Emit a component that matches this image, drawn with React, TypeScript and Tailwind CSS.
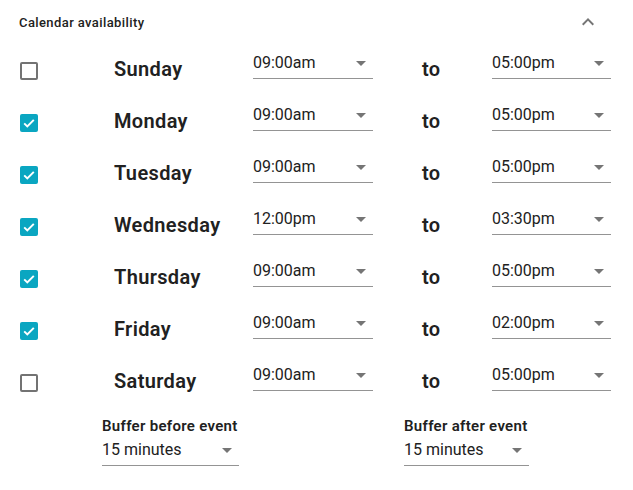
type Day = { name: string; on: boolean; from: string; to: string }

const days: Day[] = [
  { name: 'Sunday', on: false, from: '09:00am', to: '05:00pm' },
  { name: 'Monday', on: true, from: '09:00am', to: '05:00pm' },
  { name: 'Tuesday', on: true, from: '09:00am', to: '05:00pm' },
  { name: 'Wednesday', on: true, from: '12:00pm', to: '03:30pm' },
  { name: 'Thursday', on: true, from: '09:00am', to: '05:00pm' },
  { name: 'Friday', on: true, from: '09:00am', to: '02:00pm' },
  { name: 'Saturday', on: false, from: '09:00am', to: '05:00pm' },
]

function Checkbox({ checked }: { checked: boolean }) {
  if (!checked) {
    return <span className="block w-[18px] h-[18px] rounded-[2px] border-2 border-[#737373]" />
  }
  return (
    <svg width="18" height="18" viewBox="0 0 18 18" className="block">
      <rect width="18" height="18" rx="2" fill="#0aa6c1" />
      <polyline points="4.2,9.4 7.3,12.4 13.8,5.9" fill="none" stroke="#fff" strokeWidth="2" />
    </svg>
  )
}

function Select({ value, className }: { value: string; className: string }) {
  return (
    <div className={`relative flex items-center pb-[5px] border-b border-[#949494] ${className}`}>
      <span className="text-[16px] leading-5 text-[#212121]">{value}</span>
      {/* select arrow */}
      <span className="absolute right-[7px] top-[8px] w-0 h-0 border-x-[5px] border-x-transparent border-t-[5px] border-t-[#757575]" />
    </div>
  )
}

export default function App() {
  return (
    <div className="w-[633px] h-[490px] bg-white font-['Roboto',sans-serif] text-[#212121]">
      <div className="h-[43px] flex justify-between pl-[19px] pr-[33px] pt-[10px]">
        <span className="mt-[5px] text-[13px] leading-4 font-medium tracking-[0.4px]">Calendar availability</span>
        {/* expand_less */}
        <svg width="24" height="24" viewBox="0 0 24 24" className="block">
          <path d="M12 8l-6 6 1.41 1.41L12 10.83l4.59 4.58L18 14z" fill="#757575" />
        </svg>
      </div>

      {days.map((d) => (
        <div key={d.name} className="h-[52px] flex items-start pl-[20px]">
          <div className="mt-[19px]">
            <Checkbox checked={d.on} />
          </div>
          <span className="ml-[76px] w-[139px] mt-[14px] text-[20px] leading-6 font-semibold tracking-[0.35px]">{d.name}</span>
          <Select value={d.from} className="w-[120px] mt-[10px]" />
          <span className="w-[119px] pl-[49px] mt-[14px] text-[20px] leading-6 font-semibold tracking-[0.35px]">to</span>
          <Select value={d.to} className="w-[119px] mt-[10px]" />
        </div>
      ))}

      <div className="flex pl-[102px] pt-[10px]">
        <div className="flex flex-col gap-[5px] w-[137px]">
          <span className="text-[15px] leading-[18px] font-semibold tracking-[0.3px] whitespace-nowrap">Buffer before event</span>
          <Select value="15 minutes" className="w-[137px]" />
        </div>
        <div className="flex flex-col gap-[5px] w-[125px] ml-[165px]">
          <span className="text-[15px] leading-[18px] font-semibold tracking-[0.3px] whitespace-nowrap">Buffer after event</span>
          <Select value="15 minutes" className="w-[125px]" />
        </div>
      </div>
    </div>
  )
}
